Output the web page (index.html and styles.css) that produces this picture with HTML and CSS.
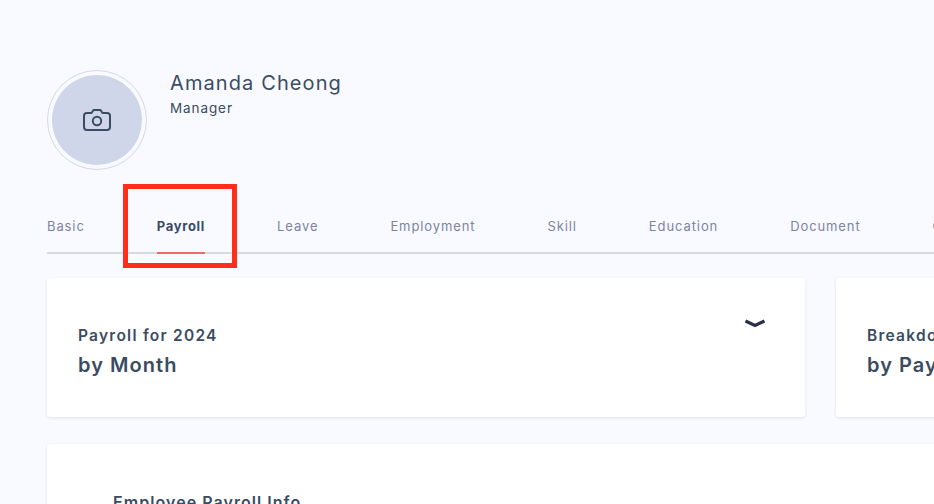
FILE: index.html
```html
<!DOCTYPE html>
<html lang="en">
<head>
    <meta charset="UTF-8">
    <title>Amanda Cheong - Payroll</title>
    <link rel="stylesheet" href="styles.css">
</head>
<body>
    <div class="page">
        <div class="profile">
            <div class="avatar">
                <div class="avatar-inner">
                    <svg width="28" height="22" viewBox="0 0 28 22" fill="none" stroke="#3a4c63" stroke-width="2" stroke-linejoin="round">
                        <path d="M4 4h4.500l2-3h7l2 3H24a3 3 0 0 1 3 3v11a3 3 0 0 1-3 3H4a3 3 0 0 1-3-3V7a3 3 0 0 1 3-3z"/>
                        <circle cx="14" cy="12" r="4.200"/>
                    </svg>
                </div>
            </div>
            <div class="profile-text">
                <div class="name">Amanda Cheong</div>
                <div class="role">Manager</div>
            </div>
        </div>

        <div class="tabs">
            <a class="tab">Basic</a>
            <a class="tab active">Payroll</a>
            <a class="tab">Leave</a>
            <a class="tab">Employment</a>
            <a class="tab">Skill</a>
            <a class="tab">Education</a>
            <a class="tab">Document</a>
            <a class="tab">Contact</a>
        </div>

        <div class="cards">
            <div class="card card-month">
                <div>
                    <div class="card-label">Payroll for 2024</div>
                    <div class="card-title">by Month</div>
                </div>
                <svg class="chevron" width="22" height="10" viewBox="0 0 22 10" fill="none" stroke="#2a2f4a" stroke-width="3.200" stroke-linejoin="miter">
                    <path d="M1.500 2l9.500 4.500L20.500 2"/>
                </svg>
            </div>
            <div class="card card-breakdown">
                <div class="card-label">Breakdown for 2024</div>
                <div class="card-title">by Payroll Item</div>
            </div>
        </div>

        <div class="info-card">
            <div class="info-title">Employee Payroll Info</div>
        </div>
    </div>

    <div class="highlight"></div>
</body>
</html>
```

FILE: styles.css
```css
html, body {
    height: 100%;
    overflow: hidden;
}
body {
    margin: 0;
    background: #f9faff;
    font-family: Inter, "Open Sans", sans-serif;
    color: #3a4c63;
    position: relative;
}
.page {
    padding: 70px 0 0 47px;
    width: 1300px;
}
.profile {
    display: flex;
    gap: 23px;
}
.avatar {
    width: 98px;
    height: 98px;
    border: 1px solid #d3d9e8;
    border-radius: 50%;
    display: flex;
    align-items: center;
    justify-content: center;
}
.avatar-inner {
    width: 90px;
    height: 90px;
    border-radius: 50%;
    background: #cfd6e9;
    display: flex;
    align-items: center;
    justify-content: center;
}
.profile-text {
    padding-top: 1px;
}
.name {
    font-size: 20px;
    line-height: 24px;
    letter-spacing: 1.100px;
}
.role {
    font-size: 13.500px;
    line-height: 16px;
    margin-top: 5px;
    letter-spacing: 0.9px;
}
.tabs {
    display: flex;
    gap: 72px;
    margin-top: 36px;
    height: 46px;
    border-bottom: 2px solid #d8d9dd;
}
.tab {
    font-size: 13px;
    line-height: 40px;
    letter-spacing: 0.9px;
    color: #7c84a3;
    height: 48px;
    box-sizing: border-box;
}
.tab.active {
    color: #3a4c63;
    font-weight: 700;
    letter-spacing: 0.7px;
    border-bottom: 2px solid #ef6a6a;
}
.cards {
    display: flex;
    gap: 31px;
    margin-top: 24px;
}
.card, .info-card {
    background: #fff;
    border-radius: 3px;
    box-shadow: 0 1px 3px rgba(50, 60, 110, 0.12);
    box-sizing: border-box;
}
.card {
    height: 139px;
    padding: 48px 31px 0;
    flex-shrink: 0;
}
.card-month {
    width: 758px;
    display: flex;
    justify-content: space-between;
}
.card-breakdown {
    width: 400px;
}
.chevron {
    margin: -7px 8px 0 0;
}
.card-label {
    font-size: 15.500px;
    font-weight: 600;
    line-height: 20px;
    letter-spacing: 1.250px;
}
.card-title {
    font-size: 20px;
    font-weight: 600;
    line-height: 26px;
    margin-top: 6px;
    letter-spacing: 1.050px;
}
.info-card {
    width: 1250px;
    height: 200px;
    margin-top: 27px;
    padding: 48px 66px;
}
.info-title {
    font-size: 16px;
    font-weight: 600;
    line-height: 20px;
    letter-spacing: 1.050px;
}
.highlight {
    position: absolute;
    left: 123px;
    top: 184px;
    width: 114px;
    height: 84px;
    box-sizing: border-box;
    border: 5px solid #ff2d1a;
}
```
